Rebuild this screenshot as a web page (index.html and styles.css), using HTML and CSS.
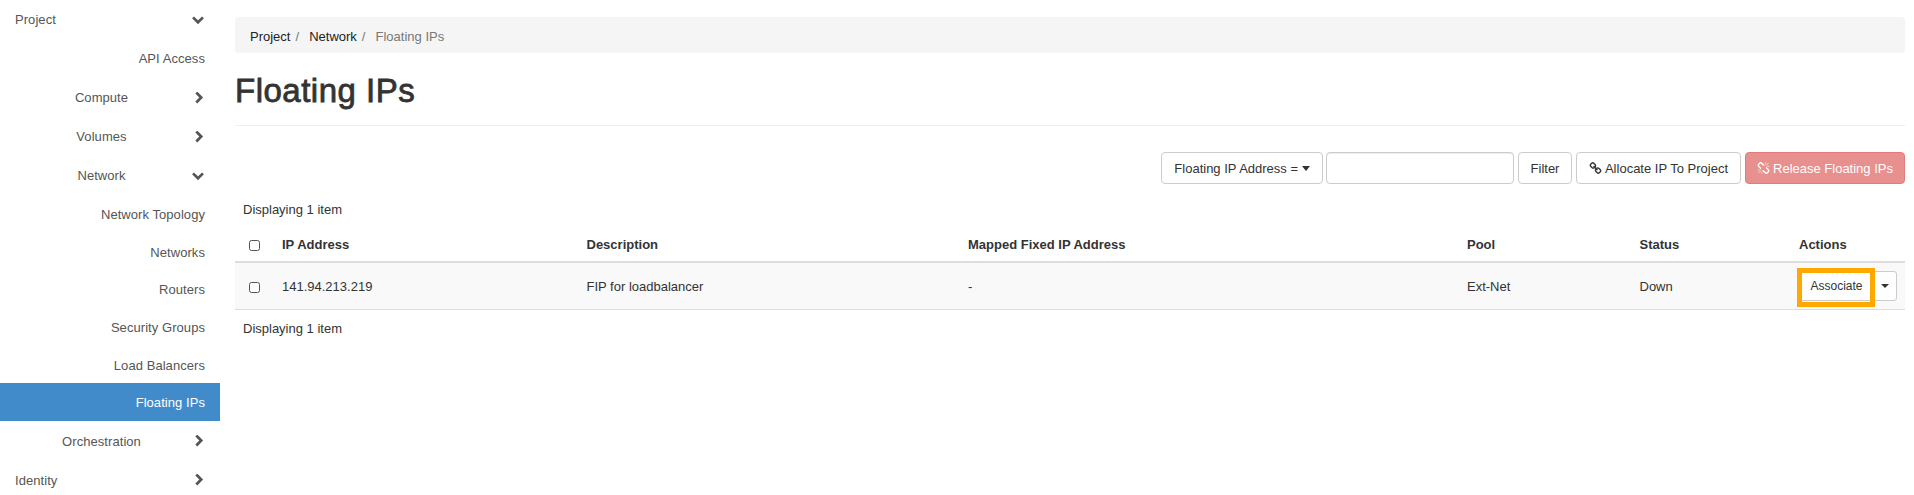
FILE: index.html
```html
<!DOCTYPE html>
<html lang="en">
<head>
<meta charset="utf-8">
<title>Floating IPs</title>
<link rel="stylesheet" href="styles.css">
</head>
<body>
<svg class="defs" width="0" height="0">
  <symbol id="down" viewBox="0 0 12 12"><path d="M1 3.4 6 8.3 11 3.4" fill="none" stroke="currentColor" stroke-width="2.7"/></symbol>
  <symbol id="right" viewBox="0 0 12 12"><path d="M4.3 0.5 9.2 5.5 4.3 10.5" fill="none" stroke="currentColor" stroke-width="2.7"/></symbol>
</svg>
<div class="layout">
  <nav class="sidebar">
    <a class="item top"><span>Project</span><svg class="chev"><use href="#down"/></svg></a>
    <a class="item leaf">API Access</a>
    <a class="item group"><span>Compute</span><svg class="chev"><use href="#right"/></svg></a>
    <a class="item group"><span>Volumes</span><svg class="chev"><use href="#right"/></svg></a>
    <a class="item group"><span>Network</span><svg class="chev"><use href="#down"/></svg></a>
    <div class="subnav">
      <a class="item leaf">Network Topology</a>
      <a class="item leaf">Networks</a>
      <a class="item leaf">Routers</a>
      <a class="item leaf">Security Groups</a>
      <a class="item leaf">Load Balancers</a>
      <a class="item leaf active">Floating IPs</a>
    </div>
    <a class="item group"><span>Orchestration</span><svg class="chev"><use href="#right"/></svg></a>
    <a class="item top"><span>Identity</span><svg class="chev"><use href="#right"/></svg></a>
  </nav>
  <main class="content">
    <div class="breadcrumb"><a>Project</a><i>/</i><a>Network</a><i>/</i><span>Floating IPs</span></div>
    <h1>Floating IPs</h1>
    <div class="toolbar">
      <button class="btn select">Floating IP Address = <b class="caret"></b></button>
      <input class="search" type="text">
      <button class="btn filter">Filter</button>
      <button class="btn allocate"><svg class="icon" viewBox="0 0 1792 1792"><path d="M1520 1216q0-40-28-68l-208-208q-28-28-68-28-42 0-72 32 3 3 19 18.5t21.5 21.5 15 19 13 25.5 3.5 27.5q0 40-28 68t-68 28q-15 0-27.5-3.5t-25.5-13-19-15-21.5-21.5-18.5-19q-33 31-33 73 0 40 28 68l206 207q27 27 68 27 40 0 68-26l147-146q28-28 28-67zm-703-705q0-40-28-68l-206-207q-28-28-68-28-39 0-68 27l-147 146q-28 28-28 67 0 40 28 68l208 208q27 27 68 27 42 0 72-31-3-3-19-18.5t-21.5-21.5-15-19-13-25.5-3.5-27.5q0-40 28-68t68-28q15 0 27.5 3.5t25.5 13 19 15 21.5 21.5 18.5 19q33-31 33-73zm895 705q0 120-85 203l-147 146q-83 83-203 83-121 0-204-85l-206-207q-83-83-83-203 0-123 88-209l-88-88q-86 88-208 88-120 0-204-84l-208-208q-84-84-84-204t85-203l147-146q83-83 203-83 121 0 204 85l206 207q83 83 83 203 0 123-88 209l88 88q86-88 208-88 120 0 204 84l208 208q84 84 84 204z"/></svg>Allocate IP To Project</button>
      <button class="btn danger"><svg class="icon" viewBox="0 0 1792 1792"><path d="M503 1271l-256 256q-10 9-23 9-12 0-23-9-9-10-9-23t9-23l256-256q10-9 23-9t23 9q9 10 9 23t-9 23zm169 41v320q0 14-9 23t-23 9-23-9-9-23v-320q0-14 9-23t23-9 23 9 9 23zm-224-224q0 14-9 23t-23 9h-320q-14 0-23-9t-9-23 9-23 23-9h320q14 0 23 9t9 23zm1264 128q0 120-85 203l-147 146q-83 83-203 83-121 0-204-85l-334-335q-21-21-42-56l239-18 273 274q28 28 68 27.5t68-27.5l147-146q28-28 28-67 0-40-28-68l-274-275 18-239q35 21 56 42l336 336q84 86 84 204zm-617-724l-239 18-273-274q-28-28-68-28-39 0-68 27l-147 146q-28 28-28 67 0 40 28 68l274 274-18 240q-35-21-56-42l-336-336q-84-86-84-204 0-120 85-203l147-146q83-83 203-83 121 0 204 85l334 335q21 21 42 56zm633 84q0 14-9 23t-23 9h-320q-14 0-23-9t-9-23 9-23 23-9h320q14 0 23 9t9 23zm-544-544v320q0 14-9 23t-23 9-23-9-9-23v-320q0-14 9-23t23-9 23 9 9 23zm407 151l-256 256q-11 9-23 9t-23-9q-9-10-9-23t9-23l256-256q10-9 23-9t23 9q9 10 9 23t-9 23z"/></svg>Release Floating IPs</button>
    </div>
    <div class="count">Displaying 1 item</div>
    <table class="table">
      <colgroup><col class="c-check"><col class="c-ip"><col class="c-desc"><col class="c-map"><col class="c-pool"><col class="c-status"><col></colgroup>
      <thead><tr><th><span class="check"></span></th><th>IP Address</th><th>Description</th><th>Mapped Fixed IP Address</th><th>Pool</th><th>Status</th><th>Actions</th></tr></thead>
      <tbody><tr><td><span class="check"></span></td><td>141.94.213.219</td><td>FIP for loadbalancer</td><td>-</td><td>Ext-Net</td><td>Down</td>
        <td><div class="actions"><button class="btn associate">Associate</button><button class="btn toggle"><b class="caret"></b></button><span class="highlight"></span></div></td></tr></tbody>
    </table>
    <div class="count footer">Displaying 1 item</div>
  </main>
</div>
</body>
</html>
```

FILE: styles.css
```css
* { box-sizing: border-box; }
body {
  margin: 0;
  height: 495px;
  overflow: hidden;
  background: #fff;
  color: #333;
  font: 13px/19px "Liberation Sans", Arial, sans-serif;
}
.defs { display: block; }
.layout { display: flex; }

/* Sidebar */
.sidebar { width: 220px; flex: none; color: #555; letter-spacing: 0.06px; }
.item {
  display: flex;
  align-items: center;
  height: 39px;
  padding: 0 15px;
}
.item span { flex: 1; }
.group span { padding-right: 4px; text-align: center; }
.leaf { justify-content: flex-end; }
.subnav { padding-bottom: 1px; }
.subnav .item { height: 37.66px; padding-top: 1.7px; }
.chev { width: 12px; height: 12px; flex: none; margin-right: 1px; }
.active { background: #428bca; color: #fff; }

/* Main column */
.content { width: 1670px; margin-left: 15px; padding-top: 17px; }
.breadcrumb {
  display: flex;
  height: 36px;
  padding: 10px 15px 0;
  border-radius: 4px;
  background: #f5f5f5;
  color: #777;
}
.breadcrumb a { color: #222; }
.breadcrumb i { width: 18.7px; padding-left: 5px; font-style: normal; }
h1 {
  height: 73px;
  margin: 0;
  padding-top: 20px;
  border-bottom: 1px solid #eee;
  font-size: 33px;
  font-weight: 400;
  line-height: 36px;
  letter-spacing: 0.5px;
  -webkit-text-stroke: 0.8px #333;
}
.toolbar {
  display: flex;
  justify-content: flex-end;
  gap: 4px;
  margin-top: 26px;
}
.btn {
  display: flex;
  align-items: center;
  justify-content: center;
  height: 32px;
  padding: 0;
  border: 1px solid #ccc;
  border-radius: 4px;
  background: #fff;
  color: #333;
  font: inherit;
  white-space: pre;
}
.select { width: 162px; }
.search {
  width: 188px;
  height: 32px;
  margin-left: -1px;
  border: 1px solid #ccc;
  border-radius: 4px;
  box-shadow: inset 0 1px 1px rgba(0, 0, 0, 0.075);
}
.filter { width: 54px; }
.allocate { width: 165px; }
.danger { width: 160px; border-color: #e27c79; background: #e8908e; color: #fff; }
.icon { width: 13px; height: 13px; margin-right: 3px; fill: currentColor; }
.caret {
  border-top: 4px solid #333;
  border-left: 4px solid transparent;
  border-right: 4px solid transparent;
}
.count { padding: 16px 8px 0; height: 44px; }
.footer { padding-top: 9px; }

/* Table */
.table { width: 100%; table-layout: fixed; border-collapse: separate; border-spacing: 0; }
.c-check { width: 39px; }
.c-ip { width: 304.5px; }
.c-desc { width: 381.5px; }
.c-map { width: 499px; }
.c-pool { width: 172.5px; }
.c-status { width: 159.5px; }
th, td { padding: 0 8px; text-align: left; vertical-align: middle; }
th { height: 35px; border-bottom: 2px solid #ddd; }
td { height: 47px; border-bottom: 1px solid #ddd; background: #f9f9f9; }
.check {
  display: block;
  width: 11px;
  height: 11px;
  margin: 2px 0 0 6px;
  border: 1px solid #555;
  border-radius: 2.5px;
  background: #fff;
}
.actions { display: flex; position: relative; width: 98px; }
.actions .btn { height: 30px; font-size: 12px; }
.associate { width: 75px; border-radius: 3px 0 0 3px; }
.toggle { width: 24px; margin-left: -1px; border-radius: 0 3px 3px 0; }
.select .caret { border-width: 5px 4.5px 0; }
.highlight {
  position: absolute;
  left: -2px;
  top: -3px;
  width: 78px;
  height: 39px;
  border: 5px solid #ffa800;
}
```
